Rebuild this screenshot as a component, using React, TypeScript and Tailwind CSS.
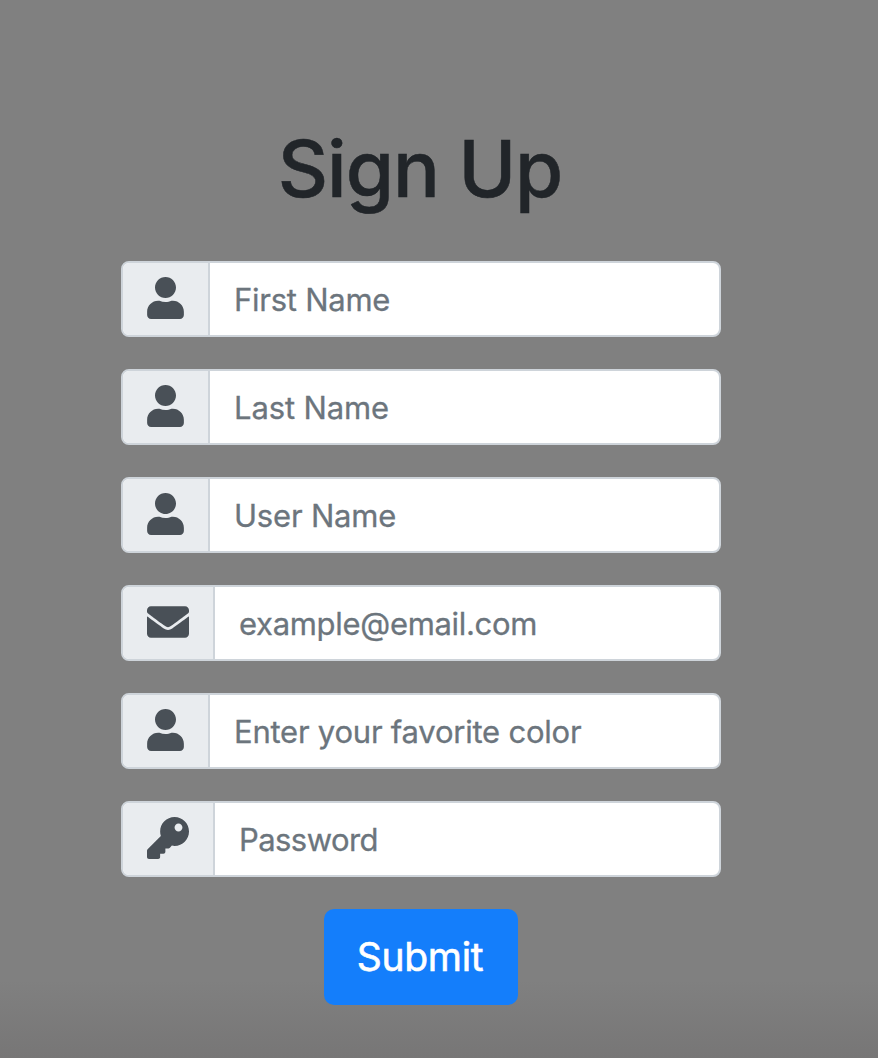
import { FaUser, FaEnvelope, FaKey } from "react-icons/fa";

const fields = [
  { placeholder: "First Name", icon: FaUser, type: "text", addon: "w-[87px]", size: "w-[37px] h-[42px]", spacing: "tracking-[-0.25px]" },
  { placeholder: "Last Name", icon: FaUser, type: "text", addon: "w-[87px]", size: "w-[37px] h-[42px]", spacing: "tracking-[-0.12px]" },
  { placeholder: "User Name", icon: FaUser, type: "text", addon: "w-[87px]", size: "w-[37px] h-[42px]", spacing: "tracking-[-0.2px]" },
  { placeholder: "example@email.com", icon: FaEnvelope, type: "email", addon: "w-[92px]", size: "w-[42px] h-[42px]", spacing: "tracking-[-0.31px]" },
  { placeholder: "Enter your favorite color", icon: FaUser, type: "text", addon: "w-[87px]", size: "w-[37px] h-[42px]", spacing: "tracking-[-0.23px]" },
  { placeholder: "Password", icon: FaKey, type: "password", addon: "w-[92px]", size: "w-[42px] h-[42px]", spacing: "tracking-[-0.57px]" },
];

export default function App() {
  return (
    <main className="h-[1058px] w-[878px] overflow-hidden bg-[linear-gradient(to_bottom,#808080_0,#808080_980px,#777676_1058px)] pl-[121px] pt-[121px] font-['Inter',sans-serif]">
      <form className="flex w-[600px] flex-col items-center" onSubmit={(e) => e.preventDefault()}>
        <h1 className="mb-[44px] h-[96px] pr-[2px] text-[78px] font-medium leading-[96px] tracking-[-1.1px] text-[#212529] [-webkit-text-stroke:0.5px_#212529]">Sign Up</h1>
        <div className="flex w-full flex-col gap-8">
          {fields.map(({ placeholder, icon: Icon, type, addon, size, spacing }) => (
            <label key={placeholder} className="flex h-[76px] overflow-hidden rounded-lg border-2 border-[#ced4da] bg-white">
              <span className={`flex shrink-0 items-center border-r-2 border-[#ced4da] bg-[#e9ecef] pl-6 pb-0.5 ${addon}`}>
                <Icon className={`shrink-0 text-[#495057] ${size}`} />
              </span>
              <input
                type={type}
                placeholder={placeholder}
                className={`min-w-0 flex-1 px-6 pt-0.5 text-[31px] text-[#6c757d] outline-none [-webkit-text-stroke:0.3px_#6c757d] placeholder:text-[#6c757d] ${spacing}`}
              />
            </label>
          ))}
        </div>
        <button className="mt-8 h-24 w-[194px] rounded-[10px] bg-[#147efb] pr-0.5 text-[39px] tracking-[-0.3px] text-white [-webkit-text-stroke:0.6px_white]">Submit</button>
      </form>
    </main>
  );
}
